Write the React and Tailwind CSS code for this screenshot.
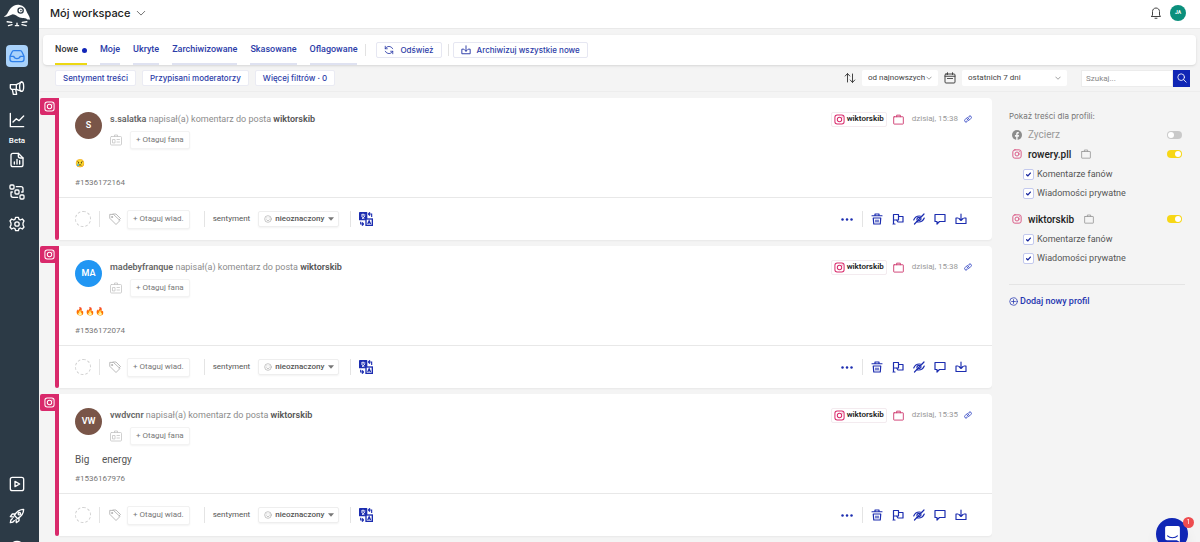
import React, { useState } from 'react';

const Icon = ({ children, className, box = 24, width = 2, fill = 'none' }) => (
  <svg
    viewBox={`0 0 ${box} ${box}`}
    className={`shrink-0 ${className}`}
    fill={fill}
    stroke="currentColor"
    strokeWidth={width}
    strokeLinecap="round"
    strokeLinejoin="round"
    aria-hidden="true"
  >
    {children}
  </svg>
);

const Logo = () => (
  <svg viewBox="0 0 84 70" className="h-[23px] w-[28px] shrink-0" fill="none" aria-hidden="true">
    <path d="M2 38C12 36 14 24 22 14C29 5 40 1 50 3C62 5 68 12 71 22C73 29 80 34 82 48C76 45 74 50 70 44C64 44 60 43 54 42C44 40 38 31 29 31C20 33 12 41 2 38Z" fill="#fff" />
    <circle cx="53" cy="20" r="8" fill="#fff" stroke="#2c3a46" strokeWidth="4" />
    <circle cx="54" cy="20" r="2.500" fill="#2c3a46" />
    <path d="M12 54L26 56M16 66L27 63M58 56L72 54M57 63L70 66M37 66H47M42 58V66" stroke="#fff" strokeWidth="4" strokeLinecap="round" />
  </svg>
);

const Chevron = ({ className }) => (
  <Icon className={className}><path d="M3 8l9 9 9-9" /></Icon>
);

const Instagram = ({ className }) => (
  <Icon className={className} width={2.2}>
    <rect x="2" y="2" width="20" height="20" rx="5" />
    <circle cx="12" cy="12" r="4.8" />
    <path d="M17.6 6.4h.01" />
  </Icon>
);

const Suitcase = ({ className }) => (
  <Icon className={className}>
    <rect x="1.500" y="6" width="21" height="16" rx="1" />
    <path d="M8 6V2.500h8V6" />
  </Icon>
);

const Download = ({ className }) => (
  <Icon className={className} width={2.3}>
    <path d="M6 10H2v11h20V10h-4M12 2v13M8 11l4 4 4-4" />
  </Icon>
);

const Translate = () => (
  <svg viewBox="0 0 42 42" className="h-3.5 w-3.5" fill="none" aria-hidden="true">
    <rect width="25" height="25" rx="2" fill="#1c2db0" />
    <path d="M12 5v4M6 9h13M8 12c2 4 4 6 8 8M17 12c-2 4-4 6-8 8" stroke="#fff" strokeWidth="3" />
    <rect x="21" y="21" width="19" height="19" fill="#fff" stroke="#1c2db0" strokeWidth="4" />
    <path d="M26 36l4.500-10L35 36M28 33h5M30 6h8v9M28 6l5-5M28 6l5 5M13 36H5v-7M14 36l-5-5M14 36l-5 5" stroke="#1c2db0" strokeWidth="3.400" />
  </svg>
);

const navTop = [
  {
    label: 'Kampanie',
    icon: (
      <>
        <path d="M2 7h9l8-4M2 7v5l1.500 2H11l8 3M11 7v7M5 14l1.500 7.500h5L10 14" />
        <ellipse cx="19" cy="10" rx="3" ry="7" />
      </>
    ),
  },
  { label: 'Statystyki', caption: 'Beta', icon: <path d="M2 2v20h20M6 15l5-5 4 3 7-7" /> },
  {
    label: 'Raporty',
    icon: (
      <>
        <path d="M14 2H6a3 3 0 0 0-3 3v14a3 3 0 0 0 3 3h12a3 3 0 0 0 3-3V9z" />
        <path d="M14 2v4a3 3 0 0 0 3 3h4M8 18v-3M12 18v-7M16 18v-5" />
      </>
    ),
  },
  {
    label: 'Automatyzacje',
    icon: (
      <>
        <rect x="1.500" y="1.500" width="6" height="6" rx="1.500" />
        <rect x="9" y="9" width="6" height="6" rx="1.500" />
        <rect x="16.500" y="16.500" width="6" height="6" rx="1.500" />
        <path d="M11 4h7a3 3 0 0 1 3 3v5h-2M5 12H3v5a3 3 0 0 0 3 3h7" />
      </>
    ),
  },
  {
    label: 'Ustawienia',
    icon: (
      <>
        <path d="M10 2h4l1 3 2 1 3-1.500 2.500 3-1.500 3v3l1.500 3-2.500 3L17 18l-2 1-1 3h-4l-1-3-2-1-3 1.500-2.500-3L3 13.500v-3L1.500 7.500l2.500-3L7 6l2-1z" />
        <circle cx="12" cy="12" r="3.300" />
      </>
    ),
  },
];

const navBottom = [
  {
    label: 'Samouczki',
    icon: (
      <>
        <rect x="2" y="2" width="20" height="20" rx="3" />
        <path d="M9 8v8l7-4z" />
      </>
    ),
  },
  {
    label: 'Nowości',
    icon: (
      <>
        <path d="M22 2c-7 0-11 4-14 9l5 5c5-3 9-7 9-14zM9 9H5l-3 4 5 .500M15 15v4l-4 3-.500-5" />
        <circle cx="15.500" cy="8.500" r="1.800" />
        <path d="M5 16c-2 1-3 3-3 6 3 0 5-1 6-3" />
      </>
    ),
  },
  { label: 'Pomoc', icon: <circle cx="12" cy="12" r="10" /> },
];

const tabs = ['Nowe', 'Moje', 'Ukryte', 'Zarchiwizowane', 'Skasowane', 'Oflagowane'];
const filters = ['Sentyment treści', 'Przypisani moderatorzy', 'Więcej filtrów · 0'];

const messages = [
  { id: '1536172164', initials: 'S', color: 'bg-[#795548]', author: 's.salatka', body: '😢', emoji: true, time: 'dzisiaj, 15:38' },
  { id: '1536172074', initials: 'MA', color: 'bg-[#2196f3]', author: 'madebyfranque', body: '🔥🔥🔥', emoji: true, time: 'dzisiaj, 15:38' },
  { id: '1536167976', initials: 'VW', color: 'bg-[#795548]', author: 'vwdvcnr', body: 'Big \u2003energy', time: 'dzisiaj, 15:35' },
];

const actions = [
  {
    label: 'Usuń',
    icon: (
      <>
        <path d="M2 5.500h20M8 5V2h8v3M4.500 10l1 12h13l1-12z" />
        <path d="M10 14v4M14 14v4" />
      </>
    ),
  },
  { label: 'Oflaguj', icon: <path d="M3 22V3h10v11H3M13 7h9v11H12l-3-4M2 22h4" /> },
  {
    label: 'Ukryj',
    icon: (
      <>
        <path d="M1.500 14c2-5 6-8 11-8 2 0 4 .500 5 1M22.500 10c-2 5-6 8-11 8-2 0-3-.300-4.500-1M22 2L3 22" />
        <path d="M8 14a4 4 0 0 1 5-5M16 11a4 4 0 0 1-5 4" />
      </>
    ),
  },
  { label: 'Odpowiedz', icon: <path d="M2 3h20v14H11l-5 5v-5H2z" /> },
];

const Sidebar = () => (
  <nav className="flex w-[39px] shrink-0 flex-col items-center overflow-hidden bg-[#2c3a46] pt-1 pr-[5px] text-white">
    <Logo />
    <a href="#inbox" aria-label="Skrzynka" className="mt-[18px] flex h-[22px] w-[22px] shrink-0 items-center justify-center rounded bg-[#a9d2fb] text-[#2f80ea]">
      <Icon className="h-4 w-4">
        <path d="M1.500 12.500L4.500 6A3 3 0 0 1 7.500 4h9a3 3 0 0 1 3 2l3 6.500V17a3.500 3.500 0 0 1-3.500 3.500H5A3.500 3.500 0 0 1 1.500 17zM2 12.500h5c1 3 2.500 3.500 5 3.500s4-.500 5-3.500h5" />
      </Icon>
    </a>
    <div className="mt-[13px] flex flex-col items-center gap-4">
      {navTop.map((item) => (
        <a key={item.label} href="#nav" aria-label={item.label} className="flex flex-col items-center">
          <Icon className="h-4 w-4">{item.icon}</Icon>
          {item.caption && <span className="mt-[7px] -mb-[11px] text-[8px] leading-3 font-medium">{item.caption}</span>}
        </a>
      ))}
    </div>
    <div className="mt-auto -mb-3.5 flex flex-col items-center gap-4">
      {navBottom.map((item) => (
        <a key={item.label} href="#nav" aria-label={item.label}>
          <Icon className="h-4 w-4">{item.icon}</Icon>
        </a>
      ))}
    </div>
  </nav>
);

const Header = () => (
  <header className="flex h-[29px] shrink-0 items-center border-b border-[#e9e9e9] bg-white pr-3.5 pl-[11px]">
    <button className="flex items-center gap-1.5 pb-0.5 font-['Inter',sans-serif] text-[11px] font-medium text-[#222]">
      Mój workspace
      <Chevron className="h-2.5 w-2.5 text-[#555]" />
    </button>
    <div className="ml-auto flex items-center gap-2 pb-0.5">
      <button aria-label="Powiadomienia">
        <Icon className="h-3 w-3 text-[#444]">
          <path d="M3 19h18l-2-3V9c0-4-3-7-7-7S5 5 5 9v7zM10 22.500h4" />
        </Icon>
      </button>
      <button className="h-4 w-4 rounded-full bg-[#0b8f7c] text-[5px] font-bold text-white">JA</button>
    </div>
  </header>
);

const Toolbar = ({ active, onChange }) => (
  <div className="mx-1 mt-1.5 flex h-[30px] shrink-0 items-stretch rounded-sm bg-white pl-3 text-[9px] font-medium text-[#2c3ca8] shadow">
    <div className="flex gap-[13px]">
      {tabs.map((tab) => (
        <button
          key={tab}
          onClick={() => onChange(tab)}
          className={`flex items-center gap-1 border-b-2 pt-0.5 ${active === tab ? 'border-[#ecd812] text-[#333]' : 'border-[#dfe2f1]'}`}
        >
          {tab}
          {active === tab && <span className="h-[5px] w-[5px] rounded-full bg-[#1226b8]" />}
        </button>
      ))}
    </div>
    <div className="ml-2 flex items-center font-['Inter',sans-serif] text-[8px]">
      <span className="h-3 w-px bg-[#e2e2e2]" />
      <button className="ml-2.5 flex h-4 items-center gap-1.5 rounded-xs border border-[#e6e7f2] px-[7px]">
        <Icon className="h-2.5 w-2.5">
          <path d="M21 9a10 10 0 0 0-18 0V3M3 9h5M3 15a10 10 0 0 0 18 0v6M21 15h-5" />
        </Icon>
        Odśwież
      </button>
      <span className="ml-1.5 h-3 w-px bg-[#e2e2e2]" />
      <button className="ml-1 flex h-4 items-center gap-1.5 rounded-xs border border-[#e6e7f2] px-[7px]">
        <Download className="h-2.5 w-2.5" />
        Archiwizuj wszystkie nowe
      </button>
    </div>
  </div>
);

const Filters = () => (
  <div className="flex h-[27px] shrink-0 items-center border-b border-[#ededed] pr-2.5 pl-4">
    <div className="flex gap-1.5 font-['Inter',sans-serif] text-[8px]">
      {filters.map((filter) => (
        <button key={filter} className="h-4 rounded-xs border border-[#eaebf3] bg-white px-[7px] font-medium text-[#2c3ca8]">
          {filter}
        </button>
      ))}
    </div>
    <div className="ml-auto flex items-center text-[#444]">
      <Icon className="h-3 w-3">
        <path d="M7 20V3M2.500 8L7 3l4.500 5M17 4v17M12.500 16l4.500 5 4.500-5" />
      </Icon>
      <label className="relative ml-1.5 flex h-4 w-[76px] items-center rounded-xs bg-white">
        <select aria-label="Sortowanie" className="h-full w-full appearance-none pl-1.5 text-[8px] outline-none">
          <option>od najnowszych</option>
          <option>od najstarszych</option>
        </select>
        <Chevron className="pointer-events-none absolute right-1.5 h-1.5 w-1.5" />
      </label>
      <Icon className="ml-1.5 h-3 w-3">
        <rect x="2" y="4" width="20" height="18" rx="2" />
        <path d="M2 8.500h20M7 1.500V5M17 1.500V5M7 13h2M11 13h2M15 13h2" />
      </Icon>
      <label className="relative ml-1.5 flex h-4 w-[105px] items-center rounded-xs bg-white">
        <select aria-label="Zakres dat" className="h-full w-full appearance-none pl-1.5 text-[8px] outline-none">
          <option>ostatnich 7 dni</option>
          <option>ostatnich 30 dni</option>
        </select>
        <Chevron className="pointer-events-none absolute right-1.5 h-1.5 w-1.5" />
      </label>
      <form className="ml-3.5 flex" onSubmit={(e) => e.preventDefault()}>
        <input
          type="text"
          aria-label="Szukaj"
          placeholder="Szukaj..."
          className="h-[17px] w-[92px] border border-[#ececec] bg-white px-1 text-[8px] outline-none placeholder:text-[#888]"
        />
        <button aria-label="Szukaj" className="flex h-[17px] w-[17px] items-center justify-center bg-[#1026b5] text-white">
          <Icon className="h-2.5 w-2.5">
            <circle cx="10" cy="10" r="8" />
            <path d="M16 16l6 6" />
          </Icon>
        </button>
      </form>
    </div>
  </div>
);

const Separator = ({ className }) => <span className={`h-4 w-px bg-[#e4e4e4] ${className}`} />;

const MessageCard = ({ message }) => (
  <article className="flex shrink-0">
    <div className="flex w-[19px] shrink-0 justify-end">
      <span className="flex h-[17px] w-[15px] items-center justify-end rounded-l-xs bg-[#d9296b] text-white">
        <Instagram className="h-[11px] w-[11px]" />
      </span>
      <span className="w-1 rounded-b-xs bg-[#d9296b]" />
    </div>
    <div className="flex min-w-0 grow flex-col rounded-r bg-white shadow-xs">
      <div className="px-4 pt-3.5 pb-2">
        <div className="flex items-start">
          <span className={`flex h-[27px] w-[27px] shrink-0 items-center justify-center rounded-full text-[9px] font-semibold text-white ${message.color}`}>
            {message.initials}
          </span>
          <div className="ml-2 flex flex-col">
            <p className="text-[9px] leading-[14px] text-[#8c8c8c]">
              <b className="font-semibold text-[#666]">{message.author}</b> napisał(a) komentarz do posta{' '}
              <b className="font-semibold text-[#555]">wiktorskib</b>
            </p>
            <div className="mt-[5px] flex items-center gap-2">
              <Icon className="h-3 w-3 text-[#c4c4c4]" width={1.6}>
                <rect x="1" y="5" width="22" height="17" rx="2" />
                <path d="M9 5V2h6v3M5 17v-6h5v6zM14 11h5M14 16h5" />
              </Icon>
              <button className="h-[18px] rounded-xs border border-[#f3f3f3] bg-white px-[5px] text-[8px] text-[#777] shadow-xs">
                + Otaguj fana
              </button>
            </div>
          </div>
          <div className="ml-auto flex h-3.5 items-center text-[8px]">
            <span className="flex h-[15px] items-center gap-0.5 rounded-xs border border-[#f3ebef] px-0.5 font-semibold text-[#222]">
              <Instagram className="h-[11px] w-[11px] text-[#d9296b]" />
              wiktorskib
            </span>
            <Suitcase className="ml-1.5 h-[11px] w-[11px] text-[#cf3a70]" />
            <time className="ml-2 text-[#999]">{message.time}</time>
            <a href="#post" aria-label="Otwórz post" className="mr-1 ml-1.5 text-[#2a3fc0]">
              <Icon className="h-2 w-2" width={2.5}>
                <path d="M9 10l6-6a4 4 0 0 1 6 6l-6 6M15 14l-6 6a4 4 0 0 1-6-6l6-6M9 15l6-6" />
              </Icon>
            </a>
          </div>
        </div>
        <p className={`mt-[7px] h-4 leading-4 text-[#555] ${message.emoji ? 'text-[8px]' : 'text-[10px]'}`}>{message.body}</p>
        <p className="mt-[5px] text-[8px] leading-3 text-[#777]">#{message.id}</p>
      </div>
      <div className="flex h-[43px] items-center border-t border-[#e8e8e8] pr-[25px] pl-4 text-[8px] text-[#555]">
        <button aria-label="Przypisz moderatora" className="h-4 w-4 rounded-full border border-dashed border-[#d0d0d0]" />
        <Separator className="ml-2" />
        <Icon className="ml-[9px] h-3 w-3 text-[#aaa]" width={1.6}>
          <path d="M1.500 3.500v7L14 23l8-8L9.500 3.500zM8 2h6l9 9-3 3" />
          <circle cx="6" cy="8" r="1.200" />
        </Icon>
        <button className="ml-1.5 h-[19px] rounded-xs border border-[#f1f1f1] bg-white px-[5px] text-[#777] shadow-xs">
          + Otaguj wiad.
        </button>
        <Separator className="ml-3.5" />
        <label htmlFor={`sentiment-${message.id}`} className="ml-2">sentyment</label>
        <span className="relative ml-2 flex h-4 w-[81px] items-center rounded-xs border border-[#eeeeee] shadow-xs">
          <Icon className="pointer-events-none absolute left-[5px] h-2 w-2 text-[#aaa]" width={2}>
            <circle cx="12" cy="12" r="10" />
            <path d="M7 14c2 4 8 4 10 0M8.500 8.500v.500M15.500 8.500v.500" />
          </Icon>
          <select id={`sentiment-${message.id}`} className="h-full w-full appearance-none pl-4 font-medium text-[#555] outline-none">
            <option>nieoznaczony</option>
            <option>pozytywny</option>
            <option>neutralny</option>
            <option>negatywny</option>
          </select>
          <svg viewBox="0 0 10 6" className="pointer-events-none absolute right-1 h-1 w-1.5 fill-[#777]" aria-hidden="true">
            <path d="M0 0h10L5 6z" />
          </svg>
        </span>
        <Separator className="mr-2 ml-[11px]" />
        <button aria-label="Przetłumacz"><Translate /></button>
        <div className="ml-auto flex items-center gap-[9px] text-[#1c2db0]">
          <button aria-label="Więcej">
            <svg viewBox="0 0 24 6" className="h-[3px] w-3 fill-current" aria-hidden="true">
              <circle cx="3" cy="3" r="2.500" />
              <circle cx="12" cy="3" r="2.500" />
              <circle cx="21" cy="3" r="2.500" />
            </svg>
          </button>
          <Separator className="-mr-px h-3" />
          {actions.map((action) => (
            <button key={action.label} aria-label={action.label}>
              <Icon className="h-3 w-3" width={2.4}>{action.icon}</Icon>
            </button>
          ))}
          <button aria-label="Archiwizuj"><Download className="h-3 w-3" /></button>
        </div>
      </div>
    </div>
  </article>
);

const Toggle = ({ label, checked, onChange }) => (
  <input
    type="checkbox"
    role="switch"
    aria-label={label}
    checked={checked}
    onChange={onChange}
    className="ml-auto h-2 w-[15px] shrink-0 appearance-none rounded-full bg-[#c9c9c9] p-px before:block before:h-1.5 before:w-1.5 before:rounded-full before:bg-white checked:bg-[#f7d716] checked:before:ml-[7px]"
  />
);

const Check = ({ label }) => (
  <label className="flex h-[19px] items-center gap-[3px] pl-3.5 text-[9px] text-[#555]">
    <span className="relative flex h-[11px] w-[11px] items-center justify-center">
      <input type="checkbox" defaultChecked className="peer h-[11px] w-[11px] appearance-none rounded-xs border border-[#c3c9ee] bg-white" />
      <Icon className="pointer-events-none invisible absolute h-[5px] w-[5px] text-[#14239c] peer-checked:visible" width={6}>
        <path d="M3 13l6 6L21 5" />
      </Icon>
    </span>
    {label}
  </label>
);

const Profile = ({ name }) => {
  const [enabled, setEnabled] = useState(true);

  return (
    <div className="mb-1.5">
      <div className="mb-px flex h-5 items-center pl-[3px] text-[10px] font-medium text-[#222]">
        <Instagram className="h-2.5 w-2.5 text-[#d8507f]" />
        <span className="ml-1.5">{name}</span>
        <Suitcase className="ml-2.5 h-2.5 w-2.5 text-[#999]" />
        <Toggle label={name} checked={enabled} onChange={() => setEnabled(!enabled)} />
      </div>
      <Check label="Komentarze fanów" />
      <Check label="Wiadomości prywatne" />
    </div>
  );
};

const ProfilesPanel = () => {
  const [facebook, setFacebook] = useState(false);

  return (
    <aside className="w-[208px] shrink-0 pt-[18px] pr-[15px] pl-[17px]">
      <h2 className="font-['Inter',sans-serif] text-[8px] leading-3 text-[#777]">Pokaż treści dla profili:</h2>
      <div className="mt-[3px] flex h-[19px] items-center pr-[3px] pl-[3px] text-[10px] text-[#999]">
        <svg viewBox="0 0 24 24" className="h-2.5 w-2.5 shrink-0" aria-hidden="true">
          <circle cx="12" cy="12" r="12" fill="#8c8c8c" />
          <path d="M10 24v-8H7v-4h3V9.500C10 6.500 11.700 5 14.500 5c1 0 2 .200 2 .200v3H15c-1.200 0-1.500.700-1.500 1.500V12H17l-.600 4h-2.900v8z" fill="#f4f4f4" />
        </svg>
        <span className="ml-1.5">Zycierz</span>
        <Toggle label="Zycierz" checked={facebook} onChange={() => setFacebook(!facebook)} />
      </div>
      <div className="pr-[3px]">
        <Profile name="rowery.pll" />
        <Profile name="wiktorskib" />
      </div>
      <div className="mt-4 border-t border-[#e4e4e4] pt-2.5">
        <a href="#new-profile" className="flex items-center gap-0.5 text-[9px] leading-3 font-medium text-[#2436b0]">
          <Icon className="h-[9px] w-[9px]">
            <circle cx="12" cy="12" r="10" />
            <path d="M12 7v10M7 12h10" />
          </Icon>
          Dodaj nowy profil
        </a>
      </div>
    </aside>
  );
};

const ChatBubble = () => (
  <button aria-label="Czat" className="fixed right-3 -bottom-2 flex h-8 w-8 items-center justify-center rounded-full bg-[#1026b5] shadow-lg">
    <svg viewBox="0 0 24 26" className="h-4 w-[15px]" fill="none" aria-hidden="true">
      <path d="M3 0h18a3 3 0 0 1 3 3v23l-5-3H3a3 3 0 0 1-3-3V3a3 3 0 0 1 3-3z" fill="#fff" />
      <path d="M4 16c4 4 12 4 16 0" stroke="#1026b5" strokeWidth="1.800" strokeLinecap="round" />
    </svg>
    <span className="absolute -top-px -right-1.5 flex h-[11px] w-[11px] items-center justify-center rounded-full bg-[#ee4c4f] text-[7px] text-white">1</span>
  </button>
);

const App = () => {
  const [activeTab, setActiveTab] = useState('Nowe');

  return (
    <div className="flex h-screen overflow-hidden bg-[#f4f4f4] font-['Roboto',sans-serif]">
      <Sidebar />
      <div className="flex min-w-0 grow flex-col">
        <Header />
        <Toolbar active={activeTab} onChange={setActiveTab} />
        <Filters />
        <div className="flex min-h-0 grow">
          <main className="flex min-w-0 grow flex-col gap-1.5 overflow-hidden pt-1.5 pl-px">
            {messages.map((message) => (
              <MessageCard key={message.id} message={message} />
            ))}
          </main>
          <ProfilesPanel />
        </div>
      </div>
      <ChatBubble />
    </div>
  );
};

export default App;
